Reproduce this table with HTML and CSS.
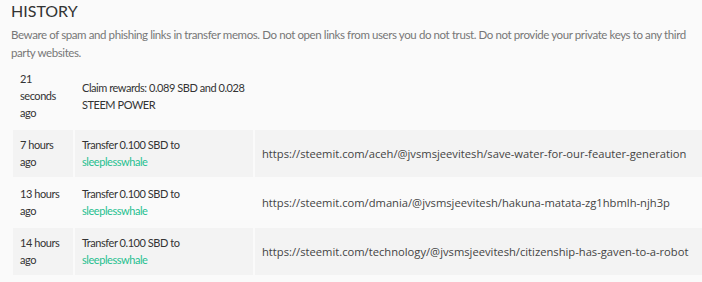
FILE: index.html
```html
<!DOCTYPE html>
<html lang="en">
<head>
    <meta charset="UTF-8">
    <title>History</title>
    <link rel="stylesheet" href="styles.css">
</head>
<body>
    <div class="history">
        <h4 class="history-title">HISTORY</h4>
        <p class="history-warning">Beware of spam and phishing links in transfer memos. Do not open links from users you do not trust. Do not provide your private keys to any third party websites.</p>
        <table class="transfer-table">
            <colgroup>
                <col class="col-time">
                <col class="col-op">
                <col class="col-memo">
            </colgroup>
            <tbody>
                <tr>
                    <td class="time">21 seconds ago</td>
                    <td class="op">Claim rewards: 0.089 SBD and 0.028 STEEM POWER</td>
                    <td class="memo"></td>
                </tr>
                <tr>
                    <td class="time">7 hours ago</td>
                    <td class="op">Transfer 0.100 SBD to <a href="#">sleeplesswhale</a></td>
                    <td class="memo">https://steemit.com/aceh/@jvsmsjeevitesh/save-water-for-our-feauter-generation</td>
                </tr>
                <tr>
                    <td class="time">13 hours ago</td>
                    <td class="op">Transfer 0.100 SBD to <a href="#">sleeplesswhale</a></td>
                    <td class="memo">https://steemit.com/dmania/@jvsmsjeevitesh/hakuna-matata-zg1hbmlh-njh3p</td>
                </tr>
                <tr>
                    <td class="time">14 hours ago</td>
                    <td class="op">Transfer 0.100 SBD to <a href="#">sleeplesswhale</a></td>
                    <td class="memo">https://steemit.com/technology/@jvsmsjeevitesh/citizenship-has-gaven-to-a-robot</td>
                </tr>
            </tbody>
        </table>
    </div>
</body>
</html>
```

FILE: styles.css
```css
body {
    margin: 0;
    background: #fafafa;
    font-family: Lato, sans-serif;
    color: #333;
    overflow: hidden;
}

.history {
    padding: 0 0 0 11px;
}

.history-title {
    margin: 0;
    font-size: 16px;
    font-weight: 400;
    line-height: 22px;
    color: #333;
}

.history-warning {
    margin: 4px 0 0;
    font-size: 11.5px;
    letter-spacing: -0.4px;
    line-height: 18px;
    color: #777;
    width: 684px;
}

.transfer-table {
    margin: 0;
    border-collapse: separate;
    border-spacing: 2px;
    table-layout: fixed;
    width: 694px;
    font-size: 11px;
    letter-spacing: -0.45px;
    line-height: 17px;
}

.col-time {
    width: 60px;
}

.col-op {
    width: 178px;
}

.transfer-table td {
    padding: 6px 7px 7px;
    vertical-align: middle;
}

.transfer-table tr:nth-child(even) td {
    background: #f3f3f3;
}

.transfer-table .memo {
    font-family: "Open Sans", "Noto Sans", sans-serif;
    font-size: 11.2px;
    letter-spacing: 0;
    color: #444;
    white-space: nowrap;
}

.transfer-table a {
    color: #1fbf8f;
    text-decoration: none;
}
```
